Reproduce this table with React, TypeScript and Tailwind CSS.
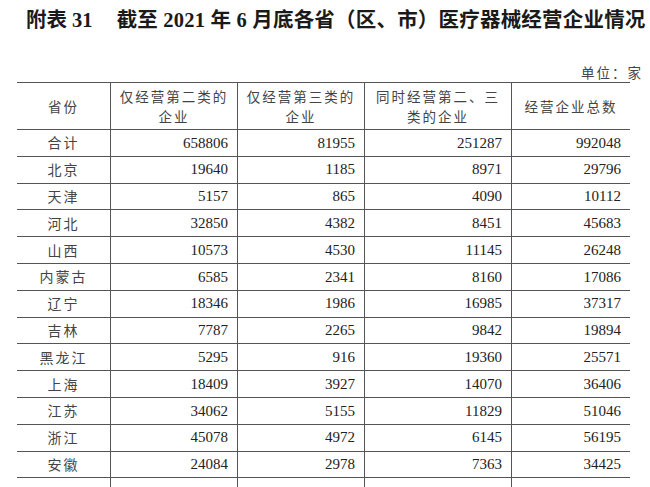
import React from "react";

const rows: [string, string, string, string, string][] = [
  ["合计", "658806", "81955", "251287", "992048"],
  ["北京", "19640", "1185", "8971", "29796"],
  ["天津", "5157", "865", "4090", "10112"],
  ["河北", "32850", "4382", "8451", "45683"],
  ["山西", "10573", "4530", "11145", "26248"],
  ["内蒙古", "6585", "2341", "8160", "17086"],
  ["辽宁", "18346", "1986", "16985", "37317"],
  ["吉林", "7787", "2265", "9842", "19894"],
  ["黑龙江", "5295", "916", "19360", "25571"],
  ["上海", "18409", "3927", "14070", "36406"],
  ["江苏", "34062", "5155", "11829", "51046"],
  ["浙江", "45078", "4972", "6145", "56195"],
  ["安徽", "24084", "2978", "7363", "34425"],
  ["", "", "", "", ""],
];

const serif = "font-['Liberation_Serif','Noto_Sans_CJK_SC',serif]";
const cjk = "font-['Noto_Sans_CJK_SC',sans-serif]";
const grid = "grid grid-cols-[93px_127px_127px_147px_119px]";

export default function App() {
  return (
    <div className="w-[650px] h-[487px] bg-white overflow-hidden">
      <div className={`h-[40px] flex items-center pl-[26px] text-[20.5px] font-bold text-[#1a1a1a] whitespace-nowrap ${serif}`}>
        <span>附表 31</span>
        <span className="ml-[24px] tracking-[0.2px]">截至 2021 年 6 月底各省（区、市）医疗器械经营企业情况</span>
      </div>

      <div className={`mt-[22px] h-[20px] flex items-center justify-end pr-[7px] text-[13.5px] tracking-[2px] text-[#444] ${cjk}`}>
        单位：家
      </div>

      <div className="ml-[17px] w-[613px]">
        <div className={`${grid} h-[48px] border-y border-[#555] text-[13.5px] tracking-[2px] text-[#444] leading-[20px] ${cjk}`}>
          <div className="flex items-center justify-center">省份</div>
          <div className="flex flex-col items-center justify-center border-l border-[#555]">
            <span>仅经营第二类的</span>
            <span>企业</span>
          </div>
          <div className="flex flex-col items-center justify-center border-l border-[#555]">
            <span>仅经营第三类的</span>
            <span>企业</span>
          </div>
          <div className="flex flex-col items-center justify-center border-l border-[#555]">
            <span>同时经营第二、三</span>
            <span>类的企业</span>
          </div>
          <div className="flex items-center justify-center border-l border-[#555]">经营企业总数</div>
        </div>

        {rows.map((r, idx) => (
          <div key={idx} className={`${grid} h-[26.8px] border-b border-[#555]`}>
            <div className={`flex items-center justify-center text-[14px] tracking-[2px] text-[#444] ${cjk}`}>
              {r[0]}
            </div>
            {r.slice(1).map((v, i) => (
              <div
                key={i}
                className={`flex items-center justify-end pr-[9px] border-l border-[#555] text-[15px] text-[#222] ${serif}`}
              >
                {v}
              </div>
            ))}
          </div>
        ))}
      </div>
    </div>
  );
}
